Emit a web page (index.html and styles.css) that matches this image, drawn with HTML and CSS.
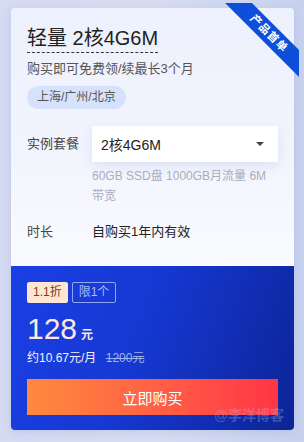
FILE: index.html
```html
<!DOCTYPE html>
<html lang="zh-CN">
<head>
  <meta charset="UTF-8">
  <title>轻量 2核4G6M</title>
  <meta name="viewport" content="width=device-width, initial-scale=1.0">
  <link rel="stylesheet" href="styles.css">
</head>
<body>

  <div class="card">
    <div class="ribbon-wrap">
      <div class="ribbon">产品首单</div>
    </div>

    <div class="card-top">
      <h2 class="title">轻量 2核4G6M</h2>
      <p class="subtitle">购买即可免费领/续最长3个月</p>
      <span class="region">上海/广州/北京</span>

      <div class="row row-plan">
        <div class="label">实例套餐</div>
        <div class="field">
          <div class="select">
            <span>2核4G6M</span>
            <span class="caret"></span>
          </div>
          <p class="hint">60GB SSD盘 1000GB月流量 6M 带宽</p>
        </div>
      </div>

      <div class="row row-time">
        <div class="label">时长</div>
        <div class="field">自购买1年内有效</div>
      </div>
    </div>

    <div class="card-bottom">
      <div class="badges">
        <span class="badge-off">1.1折</span>
        <span class="badge-limit">限1个</span>
      </div>
      <div class="price"><span class="num">128</span><span class="unit">元</span></div>
      <div class="monthly">约10.67元/月 <span class="old">1200元</span></div>
      <button class="buy-btn">立即购买</button>
      <span class="watermark">@李洋博客</span>
    </div>
  </div>

</body>
</html>
```

FILE: styles.css
```css
body {
  font-family: 'Liberation Sans', 'Noto Sans CJK SC', sans-serif;
  background: linear-gradient(90deg, #d5dbf2 0%, #d9def3 50%, #c8d2ef 100%);
  margin: 0;
  padding: 8px 10px 12px 11px;
  width: 304px;
  height: 442px;
  box-sizing: border-box;
  overflow: hidden;
}

.card {
  position: relative;
  border-radius: 4px;
  box-shadow: 0 2px 10px rgba(120, 140, 200, 0.25);
}

.card-top {
  background: linear-gradient(180deg, #edf1fd 0%, #f3f5fd 60%, #fafbff 100%);
  border-radius: 4px 4px 0 0;
  padding: 17px 16px 0 16px;
  height: 258px;
  box-sizing: border-box;
}

.title {
  display: inline-block;
  margin: 0;
  font-size: 20px;
  font-weight: 400;
  line-height: 26px;
  color: #222;
  padding-bottom: 1px;
  border-bottom: 1px dashed #333;
}

.subtitle {
  margin: 6px 0 0;
  font-size: 13px;
  line-height: 20px;
  color: #555;
}

.region {
  display: inline-block;
  margin-top: 7px;
  padding: 0 10px;
  height: 23px;
  line-height: 23px;
  font-size: 12px;
  color: #555;
  background-color: #d6e2fc;
  border-radius: 12px;
}

.row {
  display: flex;
}

.row-plan {
  margin-top: 17px;
}

.row-time {
  margin-top: 16px;
  font-size: 13px;
  line-height: 20px;
  color: #222;
}

.label {
  width: 65px;
  flex-shrink: 0;
  font-size: 13px;
  color: #444;
}

.row-plan .label {
  line-height: 36px;
}

.field {
  flex: 1;
}

.select {
  display: flex;
  align-items: center;
  justify-content: space-between;
  height: 36px;
  padding: 0 14px 0 9px;
  background: white;
  font-size: 14px;
  color: #222;
  box-shadow: 0 4px 12px rgba(150, 165, 215, 0.25);
}

.caret {
  width: 0;
  height: 0;
  border-left: 4px solid transparent;
  border-right: 4px solid transparent;
  border-top: 4px solid #444;
}

.hint {
  margin: 4px 0 0;
  width: 180px;
  font-size: 12px;
  line-height: 20px;
  color: #a8adbd;
}

.card-bottom {
  position: relative;
  height: 164px;
  box-sizing: border-box;
  padding: 16px 16px 0 16px;
  background: linear-gradient(110deg, #1a3fe4 0%, #1638d2 45%, #0c2496 100%);
  border-radius: 0 0 4px 4px;
  color: white;
}

.badges {
  display: flex;
  gap: 4px;
}

.badge-off,
.badge-limit {
  height: 21px;
  line-height: 21px;
  font-size: 12px;
  padding: 0 6px;
  border-radius: 2px;
  box-sizing: border-box;
}

.badge-off {
  background-color: #fde6d2;
  color: #7a3d16;
}

.badge-limit {
  border: 1px solid #8ea6f3;
  color: #a9bcf6;
  line-height: 19px;
}

.price {
  margin-top: 11px;
  color: #fde8df;
  height: 30px;
  line-height: 30px;
}

.price .num {
  font-size: 30px;
}

.price .unit {
  font-size: 12px;
  font-weight: bold;
  margin-left: 4px;
}

.monthly {
  margin-top: 4px;
  font-size: 12px;
  line-height: 20px;
  color: #f0f3ff;
}

.monthly .old {
  margin-left: 6px;
  color: #9fb3ef;
  text-decoration: line-through;
}

.buy-btn {
  display: block;
  width: 100%;
  height: 36px;
  margin-top: 11px;
  border: none;
  background: linear-gradient(90deg, #ff8a3d 0%, #ff5d45 55%, #ff3545 100%);
  color: white;
  font-family: inherit;
  font-size: 15px;
  cursor: pointer;
}

.watermark {
  position: absolute;
  right: 10px;
  bottom: 6px;
  font-size: 14px;
  font-weight: bold;
  color: rgba(190, 200, 235, 0.3);
}

.ribbon-wrap {
  position: absolute;
  top: -5px;
  right: -5px;
  width: 74px;
  height: 74px;
  overflow: hidden;
  z-index: 2;
}

.ribbon {
  position: absolute;
  left: -11px;
  top: 21px;
  width: 110px;
  height: 19px;
  line-height: 19px;
  text-align: center;
  background-color: #0d4fd8;
  color: white;
  font-size: 11px;
  font-weight: bold;
  letter-spacing: 1px;
  transform: rotate(45deg);
}
```
